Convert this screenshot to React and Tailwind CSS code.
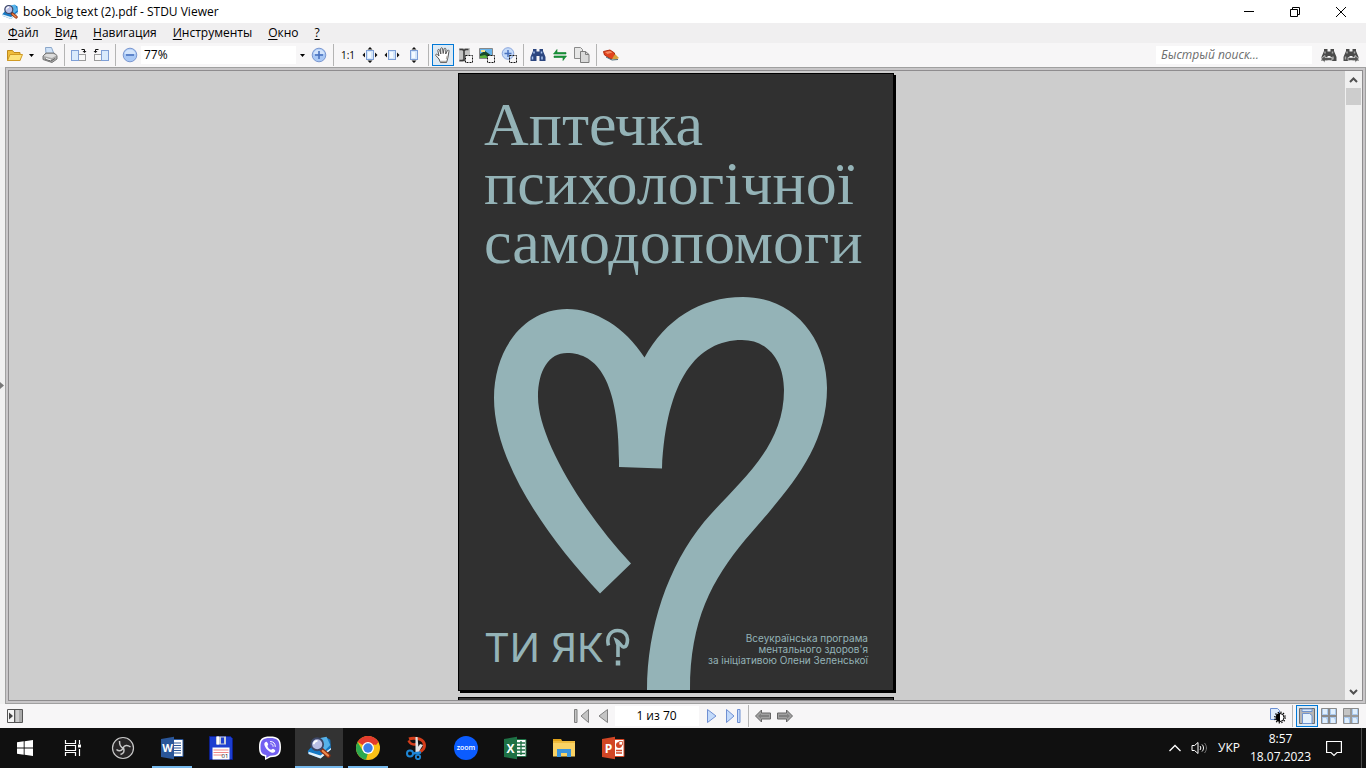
import { useState } from "react";

const Icon = ({ size = 16, children }) => (
  <svg width={size} height={size} viewBox="0 0 16 16" fill="none" aria-hidden="true">
    {children}
  </svg>
);

const ToolButton = ({ label, active, children }) => (
  <button
    type="button"
    aria-label={label}
    className={
      active
        ? "flex h-[22px] w-[22px] shrink-0 items-center justify-center border border-[#0078d7] bg-[#dde9f3]"
        : "flex h-[22px] w-[22px] shrink-0 items-center justify-center"
    }
  >
    {children}
  </button>
);

const Separator = () => <div className="mx-[3px] h-[22px] w-px shrink-0 bg-[#b4b4b4]" />;

const ViewerLogo = ({ size }) => (
  <Icon size={size}>
    <path d="M0.500 10L4 6l9-5 2.500 1.500L16 9l-7 6-8-3z" fill="#1679c4" />
    <path d="M1 12l8 3 7-6v-1l-7 5-8-2.500z" fill="#e4f2fb" />
    <path d="M8 1.500l5-1 2.500 5.500-4 4z" fill="#56b2ea" />
    <path d="M10 9.500l4.200 3.600" stroke="#8c2f14" strokeWidth="3" strokeLinecap="round" />
    <path d="M10.500 10l3.500 3" stroke="#f08a4b" strokeWidth="1.500" strokeLinecap="round" />
    <circle cx="6.800" cy="5.500" r="4" fill="#b9bfe6" stroke="#3d4766" strokeWidth="1.200" />
    <path d="M4.500 5.500a2.400 2.400 0 0 1 2.500-2.300" stroke="#fff" strokeWidth="1.200" />
  </Icon>
);

const ZoomGlyph = ({ plus }) => (
  <Icon>
    <circle cx="8" cy="8" r="6.800" fill="#a9c8f5" stroke="#7a97d0" />
    <path d="M2.500 7a5.600 5.600 0 0 1 11 0z" fill="#d3e4fb" />
    <path d="M4 8h8" stroke="#4a72be" strokeWidth="1.600" />
    {plus && <path d="M8 4v8" stroke="#4a72be" strokeWidth="1.600" />}
  </Icon>
);

const FitGlyph = ({ horizontal, vertical }) => (
  <Icon>
    <rect x="4.500" y="3.500" width="7" height="9" fill="#d3e6fb" stroke="#7e9fd6" />
    <path d="M6 5h3v6H6z" fill="#f3f9ff" />
    {horizontal && <path d="M3 5.500v5L0.500 8zM13 5.500v5L15.500 8z" fill="#111" />}
    {vertical && <path d="M5.500 2.500h5L8 0zM5.500 13.500h5L8 16z" fill="#111" />}
  </Icon>
);

const Binoculars = ({ fill, light, arrow }) => (
  <Icon>
    <path d="M3 2h3.500v2.500h3V2H13v2l2.500 6v4h-6V9h-3v5h-6v-4L3 4z" fill={fill} />
    <path d="M4 4.500v2M11.500 4.500v2M2.500 9.500v3M12 9.500v3" stroke={light} strokeWidth="1.500" />
    {arrow === "left" && (
      <path d="M0 12l4-3.500v2h7v3H4v2z" fill="#555" stroke="#f4f4f4" strokeWidth="0.600" />
    )}
    {arrow === "right" && (
      <path d="M16 12l-4-3.500v2H5v3h7v2z" fill="#555" stroke="#f4f4f4" strokeWidth="0.600" />
    )}
  </Icon>
);

const RotateGlyph = ({ left }) => (
  <Icon>
    <g transform={left ? "translate(16 0) scale(-1 1)" : undefined}>
      <rect x="7.500" y="7.500" width="7" height="6" fill="#f8f8f8" stroke="#9a9a9a" />
      <rect x="0.500" y="3.500" width="7" height="10" fill="#d9eafc" stroke="#7f9fd6" />
      <path d="M10.500 2.500h3v2" stroke="#111" />
      <path d="M11.500 4h4l-2 2z" fill="#111" />
    </g>
  </Icon>
);

const Marquee = () => (
  <path d="M8.500 8.500h7v7h-7z" fill="#f7f6f7" stroke="#111" strokeDasharray="2 1" />
);

const TitleBar = () => (
  <header className="flex h-[23px] shrink-0 items-center bg-white pl-[2px]">
    <ViewerLogo size={16} />
    <h1 className="ml-[5px] text-[12px] leading-4 text-black">book_big text (2).pdf - STDU Viewer</h1>
    <div className="ml-auto flex h-full pr-0.5">
      <button type="button" aria-label="Свернуть" className="flex w-[46px] items-center justify-center">
        <svg width="10" height="10" viewBox="0 0 10 10">
          <path d="M0 4.500h10" stroke="#000" />
        </svg>
      </button>
      <button type="button" aria-label="Восстановить" className="flex w-[46px] items-center justify-center">
        <svg width="10" height="10" viewBox="0 0 10 10" fill="none" stroke="#000">
          <path d="M0.500 2.500h7v7h-7zM2.500 2.500v-2h7v7h-2" />
        </svg>
      </button>
      <button type="button" aria-label="Закрыть" className="flex w-[46px] items-center justify-center">
        <svg width="10" height="10" viewBox="0 0 10 10" stroke="#000">
          <path d="M0 0l10 10M10 0L0 10" />
        </svg>
      </button>
    </div>
  </header>
);

const menuItems = ["Файл", "Вид", "Навигация", "Инструменты", "Окно", "?"];

const MenuBar = () => (
  <nav className="flex h-5 shrink-0 items-center gap-4 bg-[#f0eff0] pl-2 text-[12px] leading-4 text-black">
    {menuItems.map((item) => (
      <button key={item} type="button">
        <span className="underline underline-offset-2">{item[0]}</span>
        {item.slice(1)}
      </button>
    ))}
  </nav>
);

const Toolbar = () => {
  const [zoom, setZoom] = useState("77%");
  const [query, setQuery] = useState("");

  return (
    <div className="flex h-6 shrink-0 items-center bg-[#f7f6f7] px-1">
      <ToolButton label="Открыть">
        <Icon>
          <path d="M0.500 13.500v-10h5l1.500 2h6v8z" fill="#f0bd3c" stroke="#c08a1c" />
          <path d="M0.500 13.500L3 7.500h12.500l-2.500 6z" fill="#fde27a" stroke="#d19b25" />
        </Icon>
      </ToolButton>
      <button type="button" aria-label="Недавние файлы" className="flex w-[13px] justify-center pr-[2px]">
        <svg width="5" height="3" viewBox="0 0 5 3">
          <path d="M0 0h5L2.500 3z" fill="#000" />
        </svg>
      </button>
      <ToolButton label="Печать">
        <Icon>
          <path d="M4 7L3.500 0.500h6L12 7z" fill="#cfe2f8" stroke="#8ba6c9" />
          <path d="M1 9l3-3h8l3 2.500v3.500l-5 3.500-9-3z" fill="#a9a9a9" stroke="#777" />
          <path d="M1.500 9l3-2h7l3 1.500-4.500 2.500z" fill="#dcdcdc" />
          <path d="M3 12l6 2 4-2.500" stroke="#666" />
          <path d="M4 11.500l5 1.500" stroke="#fff" />
        </Icon>
      </ToolButton>
      <Separator />
      <ToolButton label="Повернуть вправо">
        <RotateGlyph />
      </ToolButton>
      <ToolButton label="Повернуть влево">
        <RotateGlyph left />
      </ToolButton>
      <Separator />
      <ToolButton label="Уменьшить">
        <ZoomGlyph />
      </ToolButton>
      <div className="flex h-[18px] w-[167px] shrink-0 bg-white">
        <input
          aria-label="Масштаб"
          value={zoom}
          onChange={(e) => setZoom(e.target.value)}
          className="w-0 flex-1 bg-white pl-[3px] text-[12px] leading-[18px] text-black outline-none"
        />
        <button
          type="button"
          aria-label="Выбрать масштаб"
          className="flex w-3 items-center justify-center bg-[#f7f6f7]"
        >
          <svg width="5" height="3" viewBox="0 0 5 3">
            <path d="M0 0h5L2.500 3z" fill="#000" />
          </svg>
        </button>
      </div>
      <ToolButton label="Увеличить">
        <ZoomGlyph plus />
      </ToolButton>
      <Separator />
      <ToolButton label="Реальный размер">
        <span className="text-[10px] leading-4 font-medium text-black">1:1</span>
      </ToolButton>
      <ToolButton label="Страница целиком">
        <FitGlyph horizontal vertical />
      </ToolButton>
      <ToolButton label="По ширине">
        <FitGlyph horizontal />
      </ToolButton>
      <ToolButton label="По высоте">
        <FitGlyph vertical />
      </ToolButton>
      <Separator />
      <ToolButton label="Рука" active>
        <Icon>
          <path
            d="M5.500 15.500L4 12 0.800 8.500c-.6-1 .6-1.800 1.500-1L4 9 2.800 3.500c0-1.300 1.500-1.400 1.800-.3L5.800 7 5.700 1.700c.2-1.300 1.700-1.200 1.900 0L8.200 6.500l.9-4.600c.4-1.100 1.800-.8 1.800.4L10.700 7l1.700-3.500c.7-1 1.900-.3 1.600.8L12.800 11l-1.300 4.500z"
            fill="#fff"
            stroke="#555"
          />
          <path d="M6 14.500h5M11.500 12l.8-3" stroke="#b5b0aa" strokeWidth="1.500" />
        </Icon>
      </ToolButton>
      <ToolButton label="Выделить текст">
        <Icon>
          <path d="M2 1h11v9H8v5H2z" fill="#c4c4c4" />
          <path d="M2.500 2.500h3l1.500 1 1.500-1h3M7 3v10M2.500 13.500h3l1.500-1 1 1" stroke="#3c3c3c" strokeWidth="1.600" />
          <Marquee />
        </Icon>
      </ToolButton>
      <ToolButton label="Выделить изображение">
        <Icon>
          <path d="M0.500 1.500h13v10H0.500z" fill="#67b3ea" stroke="#888" />
          <path d="M1 7l5-3 7 5v2H1z" fill="#174a2c" />
          <path d="M1 9l5-1 4 3H1z" fill="#59b13c" />
          <path d="M2 3h4v2H2z" fill="#f6e58c" />
          <Marquee />
        </Icon>
      </ToolButton>
      <ToolButton label="Увеличить область">
        <Icon>
          <circle cx="7" cy="6.500" r="5.800" fill="#c4daf9" stroke="#8aa5dc" />
          <path d="M3.500 6.500h7M7 3v7" stroke="#4a72be" strokeWidth="1.500" />
          <path d="M8.500 8.500h7v7h-7z" stroke="#111" strokeDasharray="2 1" />
        </Icon>
      </ToolButton>
      <Separator />
      <ToolButton label="Найти">
        <Binoculars fill="#2c4680" light="#a8c4f0" />
      </ToolButton>
      <ToolButton label="Перейти">
        <Icon>
          <path d="M5 2.500v3h9V7H1.500zM11 13.500v-3H2V9h12.500z" fill="#1b9a3c" stroke="#0d7a2a" strokeWidth="0.600" />
        </Icon>
      </ToolButton>
      <ToolButton label="Копировать">
        <Icon>
          <path d="M0.500 0.500h6l2 2v9h-8z" fill="#e6e6e6" stroke="#8a8a8a" />
          <path d="M6.500 4.500h5l3.500 3v8H6.500z" fill="#d9d9d9" stroke="#7c7c7c" />
          <path d="M11.500 4.500v3H15" stroke="#7c7c7c" />
        </Icon>
      </ToolButton>
      <Separator />
      <ToolButton label="Справка">
        <Icon>
          <path d="M0.500 4.500L7 3l4.500 3v5L8 12 1.500 8z" fill="#e2431e" stroke="#b02d10" />
          <path d="M2 5l5-1 2.500 1.500-5 1.500z" fill="#f58a62" />
          <path d="M9 12l3-5 4 4-3 1.500z" fill="#d7a03c" />
          <path d="M3 10l6 3 6-.5" stroke="#4a6a78" />
        </Icon>
      </ToolButton>
      <input
        type="search"
        aria-label="Быстрый поиск"
        placeholder="Быстрый поиск..."
        value={query}
        onChange={(e) => setQuery(e.target.value)}
        className="mr-1.5 ml-auto h-[18px] w-[156px] bg-white pl-[5px] text-[12px] leading-[18px] text-black italic outline-none placeholder:text-[#6d6d6d]"
      />
      <ToolButton label="Найти предыдущее">
        <Binoculars fill="#4a4a4a" light="#a5a5a5" arrow="left" />
      </ToolButton>
      <ToolButton label="Найти следующее">
        <Binoculars fill="#4a4a4a" light="#a5a5a5" arrow="right" />
      </ToolButton>
    </div>
  );
};

const CoverPage = () => (
  <article className="relative flex h-[618px] w-[436px] shrink-0 flex-col justify-between border border-black bg-[#303030] px-[25px] pt-[21px] pb-[24px] text-[#94b3b7] shadow-[2px_2px_0_#000]">
    <svg className="absolute inset-0 h-full w-full" viewBox="459 74 434 616" aria-hidden="true">
      <path
        d="M600 593.500L631 563.500C580 509 538 437 538 397C538 370 549 353 567 353C598 353 620 382 619 467L662 468.500C666 380 697 340 742 340C769 340 784 362 784 390C784 450 736 484 704 522C668 566 647 628 647 690L690 690C690 620 712 580 745 540C784 494 827 452 827 388C827 340 795 297 743 297C700 297 665 320 644.500 357.500C625 327 595 309 567 309C524 309 494 349 494 398C494 464 550 540 600 593.500Z"
        fill="#94b3b7"
      />
    </svg>
    <h2 className="font-['Liberation_Serif',serif] text-[62px] leading-[59px] whitespace-nowrap">
      Аптечка
      <br />
      психологічної
      <br />
      самодопомоги
    </h2>
    <div className="relative flex items-end justify-between">
      <p className="flex items-end gap-0.5 font-['Inter',sans-serif] text-[40px] leading-[36px] font-normal whitespace-nowrap">
        ТИ ЯК
        <svg width="24" height="38" viewBox="606 627 24 38" fill="none" stroke="currentColor" strokeWidth="3.600" aria-hidden="true">
          <path d="M608.500 644.500C606 635 611 629.500 617.500 629.500C624 629.500 627.500 634 627.500 638.500C627.500 643 626 646.500 623.500 646C621 645.500 619.500 641 616.500 639.500L618 644V656" />
          <path d="M618 659.500v5" strokeWidth="4.500" />
        </svg>
      </p>
      <p className="text-right font-['Inter',sans-serif] text-[10px] leading-[11px]">
        Всеукраїнська програма
        <br />
        ментального здоров'я
        <br />
        за ініціативою Олени Зеленської
      </p>
    </div>
  </article>
);

const ScrollBar = () => (
  <div className="flex w-[17px] shrink-0 flex-col items-center bg-[#f0f0f0]">
    <button type="button" aria-label="Вверх" className="flex h-[17px] w-full items-center justify-center">
      <svg width="9" height="6" viewBox="0 0 9 6" fill="none" stroke="#505050" strokeWidth="2">
        <path d="M1 5l3.500-3.500L8 5" />
      </svg>
    </button>
    <div className="h-[17px] w-[15px] bg-[#cdcdcd]" />
    <button type="button" aria-label="Вниз" className="mt-auto flex h-[17px] w-full items-center justify-center">
      <svg width="9" height="6" viewBox="0 0 9 6" fill="none" stroke="#505050" strokeWidth="2">
        <path d="M1 1l3.500 3.500L8 1" />
      </svg>
    </button>
  </div>
);

const DocumentArea = () => (
  <main className="flex min-h-0 flex-1 bg-[#f0f0f0]">
    <button type="button" aria-label="Показать панель" className="flex w-[5px] shrink-0 items-center">
      <svg width="4" height="7" viewBox="0 0 4 7">
        <path d="M0 0l4 3.500L0 7z" fill="#777" />
      </svg>
    </button>
    <div className="flex min-w-0 flex-1 border border-[#a0a0a0] bg-[#c8c6c8] p-[2px]">
      <div className="flex min-w-0 flex-1 border border-[#8e8c8e] bg-[#cdcdcd]">
        <div className="flex min-w-0 flex-1 flex-col items-center gap-1.5 overflow-hidden pt-[2px] pr-[2px]">
          <CoverPage />
          <div className="h-[618px] w-[436px] shrink-0 border border-black bg-[#303030]" />
        </div>
        <ScrollBar />
      </div>
    </div>
  </main>
);

const StatusBar = () => {
  const [page, setPage] = useState("1 из 70");

  return (
    <div className="flex h-6 shrink-0 items-center bg-[#f7f6f7] px-1">
      <div className="flex flex-1">
        <ToolButton label="Боковая панель">
          <Icon>
            <path d="M0.500 1.500h15v13H0.500z" fill="#f4f4f4" stroke="#555" />
            <path d="M2 4.500v7L6 8z" fill="#444" />
            <path d="M8 2h7v12H8z" fill="#aaa" />
            <path d="M9 2h3v12H9z" fill="#ccc" />
            <path d="M7.500 2v12" stroke="#555" />
          </Icon>
        </ToolButton>
      </div>
      <ToolButton label="Первая страница">
        <Icon>
          <path d="M0.500 1.500h2.500v13H0.500zM14.500 1.500v13L7 8z" fill="#c4c4c4" stroke="#808080" />
        </Icon>
      </ToolButton>
      <ToolButton label="Предыдущая страница">
        <Icon>
          <path d="M11.500 1.500v13L3 8z" fill="#c4c4c4" stroke="#808080" />
        </Icon>
      </ToolButton>
      <input
        aria-label="Страница"
        value={page}
        onChange={(e) => setPage(e.target.value)}
        className="mr-[2px] h-5 w-[84px] bg-white text-center text-[12px] leading-5 text-black outline-none"
      />
      <ToolButton label="Следующая страница">
        <Icon>
          <path d="M3.500 1.500v13L12 8z" fill="#c3dafa" stroke="#6f8fd2" />
        </Icon>
      </ToolButton>
      <ToolButton label="Последняя страница">
        <Icon>
          <path d="M0.500 1.500v13L8 8zM11.500 1.500h2.500v13h-2.500z" fill="#c3dafa" stroke="#6f8fd2" />
        </Icon>
      </ToolButton>
      <Separator />
      <ToolButton label="Назад">
        <Icon>
          <path d="M0.500 8L6.500 2v3h9v6h-9v3z" fill="#a0a0a0" stroke="#666" />
          <path d="M3 8l3-2.500V7h8v2H6v1.500z" fill="#808080" />
        </Icon>
      </ToolButton>
      <ToolButton label="Вперёд">
        <Icon>
          <path d="M15.500 8L9.500 2v3h-9v6h9v3z" fill="#a0a0a0" stroke="#666" />
          <path d="M13 8l-3-2.500V7H2v2h8v1.500z" fill="#808080" />
        </Icon>
      </ToolButton>
      <div className="flex flex-1 items-center justify-end">
        <ToolButton label="Контраст">
          <Icon>
            <path d="M0.500 0.500h7l2 2v9h-9z" fill="#dceafb" stroke="#6a8ed0" />
            <circle cx="10" cy="9.500" r="5.200" stroke="#000" strokeWidth="1.500" strokeDasharray="1.200 1.500" />
            <circle cx="10" cy="9.500" r="4" fill="#fff" stroke="#000" />
            <path d="M10 5.500a4 4 0 0 0 0 8z" fill="#000" />
          </Icon>
        </ToolButton>
        <Separator />
        <ToolButton label="Одна страница" active>
          <Icon>
            <path d="M0.500 0.500h15v15H0.500z" fill="#b5b5b5" stroke="#6b6b6b" />
            <path d="M3 1v2.500h10V1z" fill="#d9eafc" stroke="#6f93cf" />
            <path d="M3.500 5.500h7l2.500 2v8h-9.500z" fill="#e4f1fd" stroke="#6f93cf" />
          </Icon>
        </ToolButton>
        <ToolButton label="Разворот">
          <Icon>
            <path d="M0.500 0.500h15v15H0.500z" fill="#aac9ee" stroke="#8a8a8a" />
            <path d="M2 1h4v5H2zM10 1h4v5h-4zM2 10h3l1 2v3H2zM10 10h3l1 2v3h-4z" fill="#e0effd" />
            <path d="M8 1v14M1 8h14" stroke="#8a8a8a" strokeWidth="2" />
          </Icon>
        </ToolButton>
        <ToolButton label="Обложка и разворот">
          <Icon>
            <path d="M0.500 0.500h15v15H0.500z" fill="#aac9ee" stroke="#8a8a8a" />
            <path d="M1 1h6v6H1z" fill="#c4c4c4" />
            <path d="M10 1h4v5h-4zM2 10h3l1 2v3H2zM10 10h3l1 2v3h-4z" fill="#e0effd" />
            <path d="M8 1v14M1 8h14" stroke="#9a9a9a" strokeWidth="2" />
          </Icon>
        </ToolButton>
      </div>
    </div>
  );
};

const Svg24 = ({ children }) => (
  <svg width="24" height="24" viewBox="0 0 24 24" fill="none" aria-hidden="true">
    {children}
  </svg>
);

const apps = [
  {
    name: "Пуск",
    icon: (
      <Svg24>
        <path d="M4 6.300l6.700-1v6.200H4zM11.600 5.200L20 4v7.500h-8.400zM4 12.500h6.700v6.200L4 17.700zM11.600 12.500H20V20l-8.400-1.200z" fill="#fff" />
      </Svg24>
    ),
  },
  {
    name: "Представление задач",
    icon: (
      <Svg24>
        <path d="M3.500 4v3.500h10V4M3.500 20v-3.500h10V20M3.500 9.500h10v5h-10zM17.500 4v4M17.500 13v7" stroke="#fff" strokeWidth="1.200" />
        <path d="M16 8.500h3v3h-3z" fill="#fff" />
      </Svg24>
    ),
  },
  {
    name: "OBS Studio",
    icon: (
      <Svg24>
        <circle cx="12" cy="12" r="10.500" fill="#262425" stroke="#c8c8c8" strokeWidth="1.200" />
        <path d="M8.500 5c0 4 1.200 6.500 4 7.300M19.500 11c-3.200-2.300-5.800-1.800-7.500.8M9.500 18.500c3.500-1.200 4.200-3.500 3-6.500M5.500 13.500c2.200 2 4.700 1.800 6.500-1" stroke="#c8c8c8" strokeWidth="1.500" />
      </Svg24>
    ),
  },
  {
    name: "Word",
    running: true,
    icon: (
      <Svg24>
        <path d="M12 3.500h11v17H12z" fill="#fff" stroke="#2a5699" />
        <path d="M14 7h7M14 9.500h7M14 12h7M14 14.500h7M14 17h7" stroke="#2a5699" />
        <path d="M1 3l13-2.300v22.600L1 21z" fill="#2a5699" />
        <text x="7.500" y="16" textAnchor="middle" fontSize="11" fontWeight="700" fill="#fff">W</text>
      </Svg24>
    ),
  },
  {
    name: "Total Commander",
    icon: (
      <Svg24>
        <path d="M0.500 0.500h21l2 2v21H0.500z" fill="#1c3ed0" stroke="#0c1f8c" />
        <path d="M7 0.500h10v8H7z" fill="#c8cdd6" />
        <path d="M8 0.500h2v8H8z" fill="#fff" />
        <path d="M12 1.500h3v6h-3z" fill="#1c3ed0" />
        <path d="M3.500 11.500h17v12h-17z" fill="#fff" />
        <path d="M4.500 14h15M4.500 16.500h15M4.500 19h9" stroke="#e88" />
        <text x="16" y="22" textAnchor="middle" fontSize="6" fill="#111">01</text>
      </Svg24>
    ),
  },
  {
    name: "Viber",
    icon: (
      <Svg24>
        <path d="M12 0.500c8 0 11 2.500 11 10.500s-3 10-10.500 10.200L7 24v-3.500C2.500 19.500 1 17 1 11 1 3 4 .5 12 .5z" fill="#fff" />
        <path d="M12 2c7 0 9.500 2 9.500 9s-2.500 8.700-9.500 8.700L8.300 22v-2.900C4 18.300 2.500 16.500 2.500 11 2.500 4 5 2 12 2z" fill="#7360f2" />
        <path d="M7 6.500c1.200-1.200 1.800-.8 3 1.200.8 1.200-.8 1.600-.5 2.500.6 1.900 1.700 3 3.500 3.600.9.200 1.300-1.500 2.500-.8 2 1.300 2.300 1.800 1.200 3-1.500 1.500-3.500.5-5.200-.6-2.200-1.400-4-3.600-4.900-6-.4-1.200-.4-2.200.4-2.900z" fill="#fff" />
        <path d="M12.500 5.500c3 0 4.800 2 4.800 5M12.800 7.800c1.500.1 2.300 1 2.300 2.500" stroke="#fff" strokeLinecap="round" />
      </Svg24>
    ),
  },
  { name: "STDU Viewer", running: true, active: true, icon: <ViewerLogo size={24} /> },
  {
    name: "Chrome",
    running: true,
    icon: (
      <Svg24>
        <circle cx="12" cy="12" r="12" fill="#fbc116" />
        <path d="M12 12L1.600 6A12 12 0 0 1 22.400 6z" fill="#e33b2e" />
        <path d="M1.600 6l5.600 9.500L12 17l-2 6.800A12 12 0 0 1 1.600 6z" fill="#2da94f" />
        <path d="M12 6h10.400L20 9z" fill="#e33b2e" />
        <circle cx="12" cy="12" r="6" fill="#fff" />
        <circle cx="12" cy="12" r="4.700" fill="#3b7de8" />
      </Svg24>
    ),
  },
  {
    name: "Ножницы",
    icon: (
      <Svg24>
        <path d="M4 3c4-1.500 13-1 15 4 1.500 4.500-1 8-6 9.500" stroke="#d43d1a" strokeWidth="3" />
        <path d="M3.500 4.500c2 4 5 4.500 8 3.500" stroke="#d43d1a" strokeWidth="2.500" />
        <path d="M10.500 1h2l1.500 16h-3.500zM18 9l-5 8-2-2 4-7z" fill="#e3e3e3" />
        <circle cx="5" cy="17.500" r="3" stroke="#1f87d6" strokeWidth="2" />
        <circle cx="13" cy="21" r="2.200" stroke="#1f87d6" strokeWidth="1.800" />
        <path d="M8 17.500l8-1" stroke="#1f87d6" strokeWidth="2.500" />
      </Svg24>
    ),
  },
  {
    name: "Zoom",
    icon: (
      <Svg24>
        <circle cx="12" cy="12" r="12" fill="#0b5cff" />
        <text x="12" y="14" textAnchor="middle" fontSize="7" fontWeight="600" fill="#fff">zoom</text>
      </Svg24>
    ),
  },
  {
    name: "Excel",
    icon: (
      <Svg24>
        <path d="M12 3.500h11v17H12z" fill="#fff" stroke="#1e7145" />
        <path d="M14 7h8M14 10.500h8M14 14h8M14 17.500h8M18 5v14" stroke="#1e7145" strokeWidth="1.300" />
        <path d="M1 3l13-2.300v22.600L1 21z" fill="#1e7145" />
        <text x="7.500" y="16.500" textAnchor="middle" fontSize="12" fontWeight="700" fill="#fff">X</text>
      </Svg24>
    ),
  },
  {
    name: "Проводник",
    icon: (
      <Svg24>
        <path d="M1 3h8l1.500 2.500H1z" fill="#e0a21a" />
        <path d="M1 5h22v15.500H1z" fill="#f9d264" />
        <path d="M1 5h22v2H1z" fill="#eebb3e" />
        <path d="M5 21v-8h14v8h-4v-4H9v4z" fill="#3a94dc" />
      </Svg24>
    ),
  },
  {
    name: "PowerPoint",
    icon: (
      <Svg24>
        <path d="M12 3.500h11v17H12z" fill="#fff" stroke="#d24625" />
        <circle cx="18" cy="9" r="3" fill="#d24625" />
        <path d="M18 9V5.500h3.500V9z" fill="#fff" stroke="#d24625" strokeWidth="0.800" />
        <path d="M15 14.500h6M15 17h6" stroke="#d24625" strokeWidth="1.300" />
        <path d="M1 3l13-2.300v22.600L1 21z" fill="#d24625" />
        <text x="7.500" y="16.500" textAnchor="middle" fontSize="12" fontWeight="700" fill="#fff">P</text>
      </Svg24>
    ),
  },
];

const TaskBar = () => (
  <footer className="flex h-10 shrink-0 bg-[#101010] text-white">
    <div className="flex gap-px pl-px">
      {apps.map((app) => (
        <button
          key={app.name}
          type="button"
          aria-label={app.name}
          className={
            app.active
              ? "flex w-12 flex-col items-center bg-[#333] pt-2"
              : "flex w-12 flex-col items-center pt-2"
          }
        >
          {app.icon}
          {app.running && (
            <span className={app.active ? "mt-auto h-[2px] w-full bg-[#76b9ed]" : "mt-auto h-[2px] w-10 bg-[#76b9ed]"} />
          )}
        </button>
      ))}
    </div>
    <div className="ml-auto flex items-center pr-1">
      <button type="button" aria-label="Скрытые значки" className="flex w-6 justify-center">
        <svg width="12" height="8" viewBox="0 0 12 8" fill="none" stroke="#fff" strokeWidth="1.300">
          <path d="M0.500 7L6 1.500 11.500 7" />
        </svg>
      </button>
      <button type="button" aria-label="Громкость" className="flex w-6 justify-center">
        <svg width="17" height="14" viewBox="0 0 17 14" fill="none" stroke="#fff">
          <path d="M1 4.500h2.500L7 1.500v11L3.500 9.500H1z" />
          <path d="M9 5c1 1.200 1 2.800 0 4M11 3.500c2 2 2 5 0 7" />
          <path d="M13.500 2c2.600 3 2.600 7 0 10" stroke="#777" />
        </svg>
      </button>
      <button type="button" className="w-9 text-center text-[12px] leading-4">
        УКР
      </button>
      <button type="button" className="w-[67px] text-center text-[12px] leading-[18px]">
        <time dateTime="2023-07-18T08:57">
          8:57
          <br />
          18.07.2023
        </time>
      </button>
      <button type="button" aria-label="Уведомления" className="flex w-10 justify-center">
        <svg width="16" height="17" viewBox="0 0 16 17" fill="none" stroke="#fff" strokeWidth="1.200">
          <path d="M0.600 1.500h14.800v11H11L8 15.500l-3-3H0.600z" />
        </svg>
      </button>
      <div className="ml-[7px] h-10 w-px bg-[#4a4a4a]" />
    </div>
  </footer>
);

export default function App() {
  return (
    <div className="flex h-screen flex-col overflow-hidden font-['Open_Sans','Noto_Sans',sans-serif]">
      <TitleBar />
      <MenuBar />
      <Toolbar />
      <DocumentArea />
      <StatusBar />
      <TaskBar />
    </div>
  );
}
